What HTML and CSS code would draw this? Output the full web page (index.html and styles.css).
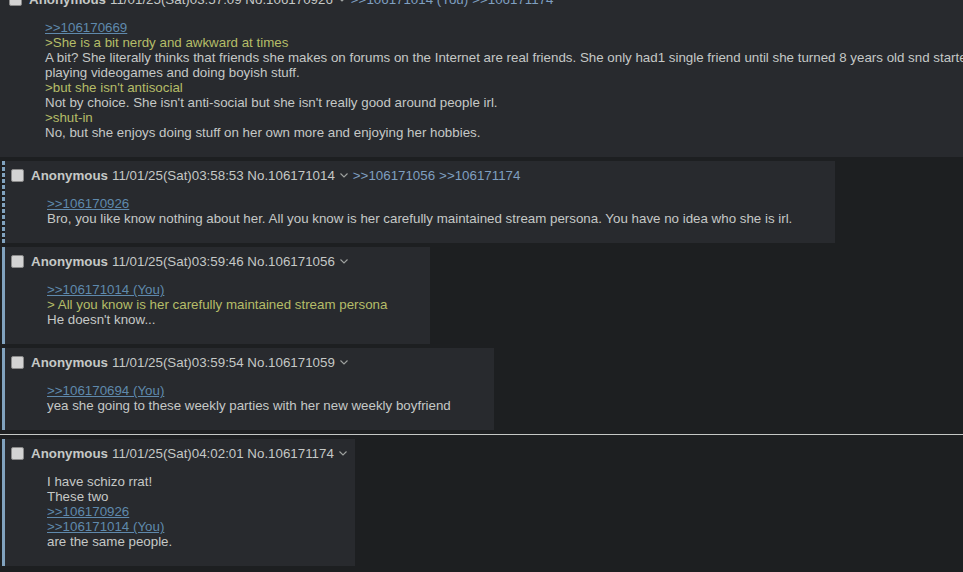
FILE: index.html
```html
<!DOCTYPE html>
<html lang="en">
<head>
    <meta charset="UTF-8">
    <meta name="viewport" content="width=device-width, initial-scale=1.0">
    <title>/vt/ - Thread</title>
    <link rel="stylesheet" href="styles.css">
</head>
<body>

    <div class="thread">

        <!-- post scrolled half out of view -->
        <div class="post first">
            <div class="reply wide">
                <div class="post-info">
                    <span class="checkbox"></span>
                    <span class="name">Anonymous</span>
                    <span class="date">11/01/25(Sat)03:57:09 No.106170926</span>
                    <svg class="menu-button" width="8" height="5" viewBox="0 0 8 5"><polyline points="0.5,0.5 4,4 7.5,0.5" fill="none" stroke="#9fa2a0" stroke-width="1.1"/></svg>
                    <a class="backlink" href="#p106171014">&gt;&gt;106171014 (You)</a>
                    <a class="backlink" href="#p106171174">&gt;&gt;106171174</a>
                </div>
                <blockquote class="post-message">
                    <a class="quotelink" href="#p106170669">&gt;&gt;106170669</a><br>
                    <span class="quote">&gt;She is a bit nerdy and awkward at times</span><br>
                    <span class="nowrap">A bit? She literally thinks that friends she makes on forums on the Internet are real friends. She only had1 single friend until she turned 8 years old snd started</span><br>
                    playing videogames and doing boyish stuff.<br>
                    <span class="quote">&gt;but she isn't antisocial</span><br>
                    Not by choice. She isn't anti-social but she isn't really good around people irl.<br>
                    <span class="quote">&gt;shut-in</span><br>
                    No, but she enjoys doing stuff on her own more and enjoying her hobbies.
                </blockquote>
            </div>
        </div>

        <div class="post quotes-you" id="p106171014">
            <div class="reply">
                <div class="post-info">
                    <span class="checkbox"></span>
                    <span class="name">Anonymous</span>
                    <span class="date">11/01/25(Sat)03:58:53 No.106171014</span>
                    <svg class="menu-button" width="8" height="5" viewBox="0 0 8 5"><polyline points="0.5,0.5 4,4 7.5,0.5" fill="none" stroke="#9fa2a0" stroke-width="1.1"/></svg>
                    <a class="backlink" href="#p106171056">&gt;&gt;106171056</a>
                    <a class="backlink" href="#p106171174">&gt;&gt;106171174</a>
                </div>
                <blockquote class="post-message">
                    <a class="quotelink" href="#p106170926">&gt;&gt;106170926</a><br>
                    Bro, you like know nothing about her. All you know is her carefully maintained stream persona. You have no idea who she is irl.
                </blockquote>
            </div>
        </div>

        <div class="post your-post" id="p106171056">
            <div class="reply">
                <div class="post-info">
                    <span class="checkbox"></span>
                    <span class="name">Anonymous</span>
                    <span class="date">11/01/25(Sat)03:59:46 No.106171056</span>
                    <svg class="menu-button" width="8" height="5" viewBox="0 0 8 5"><polyline points="0.5,0.5 4,4 7.5,0.5" fill="none" stroke="#9fa2a0" stroke-width="1.1"/></svg>
                </div>
                <blockquote class="post-message">
                    <a class="quotelink" href="#p106171014">&gt;&gt;106171014 (You)</a><br>
                    <span class="quote">&gt; All you know is her carefully maintained stream persona</span><br>
                    He doesn't know...
                </blockquote>
            </div>
        </div>

        <div class="post your-post" id="p106171059">
            <div class="reply">
                <div class="post-info">
                    <span class="checkbox"></span>
                    <span class="name">Anonymous</span>
                    <span class="date">11/01/25(Sat)03:59:54 No.106171059</span>
                    <svg class="menu-button" width="8" height="5" viewBox="0 0 8 5"><polyline points="0.5,0.5 4,4 7.5,0.5" fill="none" stroke="#9fa2a0" stroke-width="1.1"/></svg>
                </div>
                <blockquote class="post-message">
                    <a class="quotelink" href="#p106170694">&gt;&gt;106170694 (You)</a><br>
                    yea she going to these weekly parties with her new weekly boyfriend
                </blockquote>
            </div>
        </div>

        <hr class="unread-line">

        <div class="post your-post" id="p106171174">
            <div class="reply">
                <div class="post-info">
                    <span class="checkbox"></span>
                    <span class="name">Anonymous</span>
                    <span class="date">11/01/25(Sat)04:02:01 No.106171174</span>
                    <svg class="menu-button" width="8" height="5" viewBox="0 0 8 5"><polyline points="0.5,0.5 4,4 7.5,0.5" fill="none" stroke="#9fa2a0" stroke-width="1.1"/></svg>
                </div>
                <blockquote class="post-message">
                    I have schizo rrat!<br>
                    These two<br>
                    <a class="quotelink" href="#p106170926">&gt;&gt;106170926</a><br>
                    <a class="quotelink" href="#p106171014">&gt;&gt;106171014 (You)</a><br>
                    are the same people.
                </blockquote>
            </div>
        </div>

    </div>

</body>
</html>
```

FILE: styles.css
```css
html, body {
    overflow: hidden;
}
body {
    margin: 0;
    background-color: #1d1f21;
    color: #c5c8c6;
    font-family: "Liberation Sans", Arial, sans-serif;
    font-size: 10pt;
}
a {
    color: #7f9fc0;
    text-decoration: none;
}
.post {
    margin: 4px 0 4px 2px;
    display: flex;
}
.post.first {
    margin: -15px 0 4px 0;
}
.reply {
    background-color: #282a2e;
    padding: 0 3px 2px 2px;
}
.reply.wide {
    padding-left: 5px;
}
/* own posts get a solid bar, posts quoting you a dashed one */
.your-post {
    border-left: 3px solid #81a2be;
}
.quotes-you {
    padding-left: 3px;
    background: repeating-linear-gradient(to bottom, #81a2be 0 4px, transparent 4px 6px) left top / 3px 100% no-repeat;
}
.post-info {
    display: flex;
    align-items: center;
    height: 20px;
    padding-top: 4px;
    white-space: nowrap;
}
.checkbox {
    box-sizing: border-box;
    width: 13px;
    height: 13px;
    margin: 1px 7px 0 4px;
    background-color: #d3d3d3;
    border: 1px solid #8a8a8a;
    border-radius: 2px;
}
.name {
    font-weight: bold;
}
.date {
    margin-left: 4px;
}
.menu-button {
    margin: 1px 5px 0 5px;
}
.backlink {
    margin-right: 4px;
}
.post-message {
    margin: 11px 40px 15px 40px;
    line-height: 15px;
}
.quotelink {
    color: #5f89ac;
    text-decoration: underline;
}
.quote {
    color: #b5bd68;
}
.nowrap {
    white-space: nowrap;
}
.unread-line {
    margin: 0;
    height: 0;
    border: none;
    border-top: 1px solid #c5c8c6;
}
```
